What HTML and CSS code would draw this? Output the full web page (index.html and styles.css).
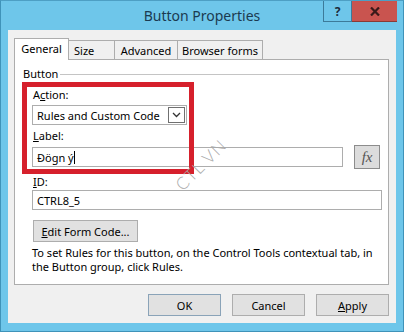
FILE: index.html
```html
<!DOCTYPE html>
<html>
<head>
<meta charset="utf-8">
<link rel="stylesheet" href="styles.css">
</head>
<body>
<div class="window">
  <div class="titlebar">
    <div></div>
    <div class="title">Button Properties</div>
    <div class="caption-btns">
      <div class="cap help">?</div>
      <div class="cap close">
        <svg width="10" height="9" viewBox="0 0 10 9"><path d="M1 0.5 L9 8.5 M9 0.5 L1 8.5" stroke="#3a1a1a" stroke-width="2.2" fill="none"/></svg>
      </div>
    </div>
  </div>
  <div class="client">
    <div class="tabs">
      <div class="tab active">General</div>
      <div class="tab w-size">Size</div>
      <div class="tab w-adv">Advanced</div>
      <div class="tab w-browser">Browser forms</div>
    </div>
    <div class="panel">
      <div class="legend-row"><span class="legend">Button</span><span class="legend-line"></span></div>
      <div class="fields">
        <div class="lbl lbl-action">A<u>c</u>tion:</div>
        <div class="select">
          <span class="select-text">Rules and Custom Code</span>
          <span class="arrow"><svg width="9" height="6" viewBox="0 0 9 6"><path d="M1 1 L4.5 4.5 L8 1" stroke="#333" stroke-width="1.3" fill="none"/></svg></span>
        </div>
        <div class="lbl lbl-label"><u>L</u>abel:</div>
        <div class="label-row">
          <div class="input input-label">Đögn ý<span class="caret"></span></div>
          <div class="fx-btn">fx</div>
        </div>
        <div class="lbl lbl-id"><u>I</u>D:</div>
        <div class="input input-id">CTRL8_5</div>
        <div class="btn edit-btn"><u>E</u>dit Form Code...</div>
        <p class="note">To set Rules for this button, on the Control Tools contextual tab, in the Button group, click Rules.</p>
      </div>
    </div>
    <div class="footer">
      <div class="btn dlg-btn default">OK</div>
      <div class="btn dlg-btn">Cancel</div>
      <div class="btn dlg-btn"><u>A</u>pply</div>
    </div>
  </div>
  <div class="highlight"></div>
  <div class="watermark">CTL VN</div>
</div>
</body>
</html>
```
FILE: styles.css
```css
* { box-sizing: border-box; }
html, body { margin: 0; padding: 0; }
body {
  font-family: "Noto Sans", "Open Sans", sans-serif;
  font-size: 11px;
  color: #000;
  width: 404px;
  height: 332px;
  overflow: hidden;
}
.window {
  position: relative;
  width: 404px;
  height: 332px;
  background: #6ec6ea;
  border: 1px solid #3f93b9;
  border-top-color: #4d9fc4;
  padding: 0 7px 8px 7px;
  display: flex;
  flex-direction: column;
}
.titlebar {
  height: 29px;
  display: grid;
  grid-template-columns: 1fr auto 1fr;
  align-items: start;
}
.title {
  font-family: "Noto Sans", sans-serif;
  font-size: 14px;
  color: #1b3a50;
  padding-top: 5px;
}
.caption-btns {
  display: flex;
  justify-content: flex-end;
  margin-right: -1px;
}
.cap {
  height: 21px;
  display: flex;
  align-items: center;
  justify-content: center;
}
.help {
  width: 29px;
  border: 1px solid #3c7a99;
  border-top: none;
  font-weight: bold;
  font-size: 12px;
  color: #1c2c3a;
}
.close {
  width: 45px;
  background: #c9544f;
  border-bottom: 1px solid #8a3a36;
}
.client {
  flex: 1;
  background: #f0f0f0;
  padding: 8px 7px 7px 6px;
  display: flex;
  flex-direction: column;
}
.tabs {
  display: flex;
  align-items: flex-end;
  height: 21px;
  position: relative;
  z-index: 1;
}
.tab {
  height: 19px;
  border: 1px solid #adadad;
  border-bottom: none;
  background: #f0f0f0;
  display: flex;
  align-items: center;
  justify-content: center;
  margin-left: -1px;
  padding-top: 1px;
}
.tab.active {
  height: 22px;
  width: 55px;
  margin-left: 0;
  background: #fff;
  margin-bottom: -1px;
  padding-top: 0;
  padding-bottom: 2px;
}
.w-size { width: 47px; justify-content: flex-start; padding-left: 5px; }
.w-adv { width: 64px; }
.w-browser { width: 86px; }
.panel {
  flex: 1;
  background: #fff;
  border: 1px solid #adadad;
  padding: 7px 8px 0 8px;
}
.legend-row {
  display: flex;
  align-items: center;
  height: 14px;
}
.legend { margin-right: 2px; line-height: 14px; }
.legend-line {
  flex: 1;
  height: 1px;
  background: #c4c4c4;
  margin-top: 1px;
}
.fields { padding-left: 9px; }
.lbl { line-height: 14px; height: 14px; padding-left: 1px; }
.lbl-action { margin-top: 7px; }
.lbl-label { margin-top: 4px; }
.lbl-id { margin-top: 6px; }
.select {
  margin-top: 3px;
  width: 155px;
  height: 20px;
  border: 1px solid #adadad;
  background: #fff;
  display: flex;
  align-items: center;
  justify-content: space-between;
  padding: 0 1px 0 4px;
}
.arrow {
  width: 17px;
  height: 16px;
  border: 1px solid #707070;
  display: flex;
  align-items: center;
  justify-content: center;
}
.label-row {
  margin-top: 2px;
  height: 24px;
  display: flex;
  align-items: center;
  gap: 11px;
}
.input {
  height: 20px;
  border: 1px solid #adadad;
  background: #fff;
  display: flex;
  align-items: center;
  padding-left: 4px;
}
.input-label { width: 313px; }
.caret {
  display: inline-block;
  width: 1px;
  height: 13px;
  background: #000;
}
.fx-btn {
  width: 26px;
  height: 24px;
  background: #dcdcdc;
  border: 1px solid #8c8c8c;
  font-family: "Liberation Serif", serif;
  font-style: italic;
  font-size: 15px;
  color: #555;
  display: flex;
  align-items: center;
  justify-content: center;
}
.input-id { width: 350px; margin-top: 1px; }
.btn {
  background: #e1e1e1;
  border: 1px solid #adadad;
  display: flex;
  align-items: center;
  justify-content: center;
}
.edit-btn {
  width: 105px;
  height: 22px;
  margin-top: 10px;
  margin-left: 1px;
}
.note {
  margin: 4px 0 0 0;
  line-height: 14px;
  padding-right: 4px;
}
.footer {
  display: flex;
  justify-content: flex-end;
  gap: 11px;
  margin-top: 9px;
}
.dlg-btn {
  width: 73px;
  height: 22px;
}
.dlg-btn.default { border-color: #8aa3b8; }
.highlight {
  position: absolute;
  left: 21px;
  top: 81px;
  width: 172px;
  height: 92px;
  border: 5px solid #d6202c;
  pointer-events: none;
}
.watermark {
  position: absolute;
  left: 155px;
  top: 153px;
  width: 90px;
  height: 22px;
  line-height: 22px;
  text-align: center;
  font-family: "Lato", "Noto Sans", sans-serif;
  font-weight: 300;
  font-size: 17px;
  letter-spacing: 1px;
  color: #a9a9a9;
  transform: rotate(-45deg);
  pointer-events: none;
}
```
